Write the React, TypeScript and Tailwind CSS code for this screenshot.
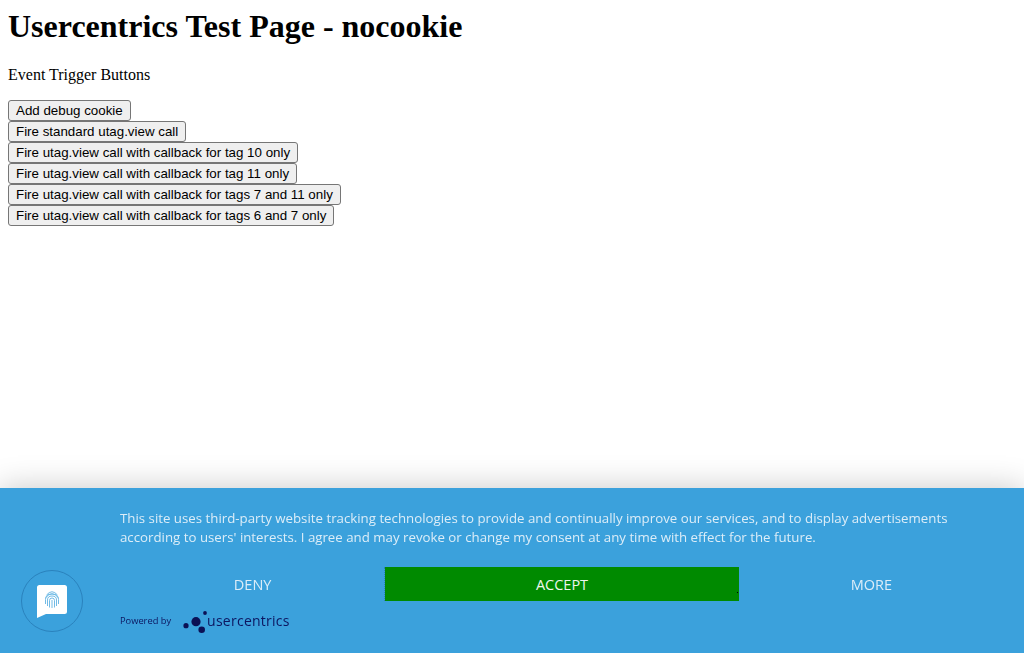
import { Fragment } from "react";

const triggers = [
  "Add debug cookie",
  "Fire standard utag.view call",
  "Fire utag.view call with callback for tag 10 only",
  "Fire utag.view call with callback for tag 11 only",
  "Fire utag.view call with callback for tags 7 and 11 only",
  "Fire utag.view call with callback for tags 6 and 7 only",
];

function FingerprintBadge() {
  return (
    <div className="flex h-[62px] w-[62px] items-center justify-center rounded-full border border-[#2a82bd]">
      <svg width="30" height="33" viewBox="0 0 30 33" className="mt-[1px]">
        <path d="M2.5 0H27.5Q30 0 30 2.500V26.500Q30 29 27.500 29H9L0 33V2.500Q0 0 2.500 0Z" fill="#fff" />
        <g fill="none" stroke="#3ba1dc" strokeWidth="0.9" opacity="0.8">
          <path d="M9.500 10Q15 3.500 20.500 10" />
          <path d="M8.500 13Q15 4.500 21.500 13" />
          <path d="M8.500 19V14.500Q8.500 9 15 9Q21.500 9 21.500 14.500V19" />
          <path d="M10.500 21V15Q10.500 11 15 11Q19.500 11 19.500 15V21" />
          <path d="M12.500 22.500V15.500Q12.500 13 15 13Q17.500 13 17.500 15.500V22.500" />
          <path d="M15 15V23" />
        </g>
      </svg>
    </div>
  );
}

function UsercentricsLogo() {
  return (
    <div className="flex items-center">
      <svg width="24" height="24" viewBox="0 0 24 24" className="shrink-0">
        <circle cx="3" cy="16.700" r="2.600" fill="#0b1155" />
        <circle cx="13" cy="12.700" r="4.600" fill="#0b1155" />
        <circle cx="22" cy="4" r="1.900" fill="#0b1155" />
        <circle cx="18.700" cy="20.700" r="3.300" fill="#0b1155" />
      </svg>
      <span className="font-['Open_Sans',sans-serif] text-[14px] leading-none tracking-[0.25px] text-[#0d1660]">
        <span className="font-medium">user</span>centrics
      </span>
    </div>
  );
}

export default function App() {
  return (
    <div className="h-[653px] bg-white p-2 font-['Liberation_Serif',serif] text-base text-black">
      <h1 className="text-[32px] leading-[37px] font-bold">Usercentrics Test Page - nocookie</h1>
      <p className="mt-[21px] mb-4 leading-[18px]">Event Trigger Buttons</p>
      <div>
        {triggers.map((label) => (
          <Fragment key={label}>
            <button className="block h-[21px] rounded-[3px] border border-[#767676] bg-[#efefef] px-[7px] font-['Liberation_Sans',sans-serif] text-[13.33px] leading-[15px] text-black">
              {label}
            </button>
          </Fragment>
        ))}
      </div>

      <div className="fixed inset-x-0 bottom-0 flex h-[165px] bg-[#3ba1dc] pt-[21px] shadow-[0_0_30px_rgba(0,0,0,0.22)]">
        <div className="flex w-[120px] shrink-0 items-end pb-[21px] pl-[21px]">
          <FingerprintBadge />
        </div>
        <div className="w-[884px]">
          <p className="w-[860px] font-['Open_Sans',sans-serif] text-[13.27px] leading-[19px] text-[#dcedf8]">
            This site uses third-party website tracking technologies to provide and continually improve our services,
            and to display advertisements according to users' interests. I agree and may revoke or change my consent
            at any time with effect for the future.
          </p>
          <div className="mt-[20px] flex h-[34px] font-['Open_Sans',sans-serif] text-[14.5px]">
            <button className="flex-[3] pt-[2px] text-[#dcedf8]">DENY</button>
            <button className="relative -ml-px flex-[4] border-l border-dotted border-[#2a82bd] bg-[#008a00] bg-clip-padding pt-[2px] text-[#eef6ee]">
              ACCEPT
              <span className="absolute right-px bottom-2 h-px w-px bg-black" />
            </button>
            <button className="flex-[3] pt-[2px] text-[#dcedf8]">MORE</button>
          </div>
          <div className="mt-[8px] flex items-center gap-[12px]">
            <span className="font-['Open_Sans',sans-serif] text-[9.3px] text-[#0d1660]">Powered by</span>
            <UsercentricsLogo />
          </div>
        </div>
      </div>
    </div>
  );
}
